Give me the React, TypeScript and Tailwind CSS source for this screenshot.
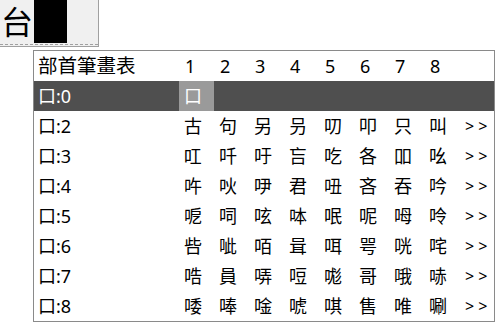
import React from "react";

const rows: { label: string; chars: string[]; more: boolean }[] = [
  { label: "口:2", chars: ["古", "句", "另", "叧", "叨", "叩", "只", "叫"], more: true },
  { label: "口:3", chars: ["叿", "吀", "吁", "吂", "吃", "各", "吅", "吆"], more: true },
  { label: "口:4", chars: ["吘", "吙", "吚", "君", "吜", "吝", "吞", "吟"], more: true },
  { label: "口:5", chars: ["呝", "呞", "呟", "呠", "呡", "呢", "呣", "呤"], more: true },
  { label: "口:6", chars: ["呰", "呲", "咟", "咠", "咡", "咢", "咣", "咤"], more: true },
  { label: "口:7", chars: ["哠", "員", "哢", "哣", "哤", "哥", "哦", "哧"], more: true },
  { label: "口:8", chars: ["唩", "唪", "唫", "唬", "唭", "售", "唯", "唰"], more: true },
];

const font = { fontFamily: '"Noto Sans", "Noto Sans CJK TC", sans-serif' };

export default function App() {
  return (
    <div className="w-[496px] h-[325px] bg-white overflow-hidden text-black" style={font}>
      <div className="w-[99px] h-[47px] bg-[#f0f0f0] border-r border-b border-[#a0a0a0]">
        <div className="h-[45px] border-b border-dashed border-[#a0a0a0] flex items-start">
          <span className="w-[34px] h-[43px] text-[32px] leading-[43px] pl-[1px]">台</span>
          <div className="w-[33px] h-[43px] bg-black" />
        </div>
      </div>
      <div className="ml-[33px] mt-[3px] w-[462px] border border-[#8a8a8a] text-[18px]">
        <div className="flex h-[30px] items-center">
          <div className="w-[145px] pl-[4px] text-[19.5px]">部首筆畫表</div>
          {["1", "2", "3", "4", "5", "6", "7", "8"].map((n) => (
            <div key={n} className="w-[35px] pl-[6px]">{n}</div>
          ))}
        </div>
        <div className="flex h-[30px] items-center bg-[#4f4f4f] text-white">
          <div className="w-[145px] pl-[4px]">口:0</div>
          <div className="w-[35px] h-[30px] bg-[#9a9a9a] pl-[5px] leading-[30px]">口</div>
        </div>
        {rows.map((r) => (
          <div key={r.label} className="flex h-[30px] items-center">
            <div className="w-[145px] pl-[4px]">{r.label}</div>
            {r.chars.map((c, i) => (
              <div key={i} className="w-[35px] pl-[5px] text-[18px]">{c}</div>
            ))}
            {r.more && <div className="w-[35px] pl-[6px] text-[16px] tracking-[4px]">&gt;&gt;</div>}
          </div>
        ))}
      </div>
    </div>
  );
}
